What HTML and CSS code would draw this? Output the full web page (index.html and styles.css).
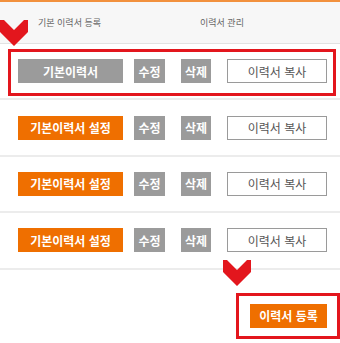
FILE: index.html
```html
<!DOCTYPE html>
<html lang="ko">
<head>
<meta charset="utf-8">
<link rel="stylesheet" href="styles.css">
</head>
<body>
<div class="page">
  <div class="head">
    <span class="h1">기본 이력서 등록</span>
    <span class="h2">이력서 관리</span>
  </div>
  <div class="list">
    <div class="row">
      <span class="btn main gray">기본이력서</span>
      <span class="btn edit">수정</span>
      <span class="btn del">삭제</span>
      <span class="btn copy">이력서 복사</span>
    </div>
    <div class="row">
      <span class="btn main orange">기본이력서 설정</span>
      <span class="btn edit">수정</span>
      <span class="btn del">삭제</span>
      <span class="btn copy">이력서 복사</span>
    </div>
    <div class="row">
      <span class="btn main orange">기본이력서 설정</span>
      <span class="btn edit">수정</span>
      <span class="btn del">삭제</span>
      <span class="btn copy">이력서 복사</span>
    </div>
    <div class="row">
      <span class="btn main orange">기본이력서 설정</span>
      <span class="btn edit">수정</span>
      <span class="btn del">삭제</span>
      <span class="btn copy">이력서 복사</span>
    </div>
  </div>
  <div class="foot">
    <span class="btn reg">이력서 등록</span>
  </div>

  <div class="mark box1"></div>
  <div class="mark box2"></div>
  <svg class="chev chev1" width="28" height="26" viewBox="0 0 28 26"><polygon points="0,0 4,0 14,10 24,0 28,0 28,12 14,26 0,12" fill="#e3161d"/></svg>
  <svg class="chev chev2" width="28" height="26" viewBox="0 0 28 26"><polygon points="0,0 4,0 14,10 24,0 28,0 28,12 14,26 0,12" fill="#e3161d"/></svg>
</div>
</body>
</html>
```
FILE: styles.css
```css
html, body {
  margin: 0;
  padding: 0;
  background: #fff;
}
body {
  font-family: "Noto Sans CJK KR", "Noto Sans", sans-serif;
  width: 340px;
  height: 343px;
  overflow: hidden;
}
.page {
  position: relative;
  width: 340px;
  height: 343px;
}
.head {
  display: flex;
  align-items: center;
  height: 41px;
  background: #f7f7f7;
  border-top: 2px solid #f2913d;
  border-bottom: 1px solid #e2e2e2;
  font-size: 9px;
  color: #666;
}
.h1 {
  margin-left: 38px;
  width: 162px;
}
.row {
  display: flex;
  align-items: center;
  box-sizing: border-box;
  height: 56.4px;
  border-bottom: 2px solid #ececec;
  padding-left: 18px;
}
.btn {
  display: flex;
  align-items: center;
  justify-content: center;
  box-sizing: border-box;
  height: 24px;
  font-size: 12px;
  font-weight: bold;
  color: #fff;
  white-space: nowrap;
}
.main {
  width: 105px;
  margin-right: 11px;
}
.gray { background: #9b9b9b; }
.orange { background: #ef6f00; }
.edit {
  width: 31px;
  margin-right: 16px;
  background: #9b9b9b;
}
.del {
  width: 30px;
  margin-right: 16px;
  background: #9b9b9b;
}
.copy {
  width: 100px;
  border: 1px solid #9a9a9a;
  background: #fff;
  color: #555;
  font-weight: normal;
}
.foot {
  display: flex;
  justify-content: flex-end;
  padding-right: 13px;
  margin-top: 34.4px;
}
.reg {
  width: 77px;
  background: #ef6f00;
}
.mark {
  position: absolute;
  box-sizing: border-box;
  border: 3px solid #e3161d;
}
.box1 {
  left: 8px;
  top: 49px;
  width: 328px;
  height: 47px;
}
.box2 {
  left: 236px;
  top: 293px;
  width: 104px;
  height: 46px;
}
.chev {
  position: absolute;
  display: block;
}
.chev1 {
  left: 0;
  top: 20px;
}
.chev2 {
  left: 223px;
  top: 260px;
}
```
